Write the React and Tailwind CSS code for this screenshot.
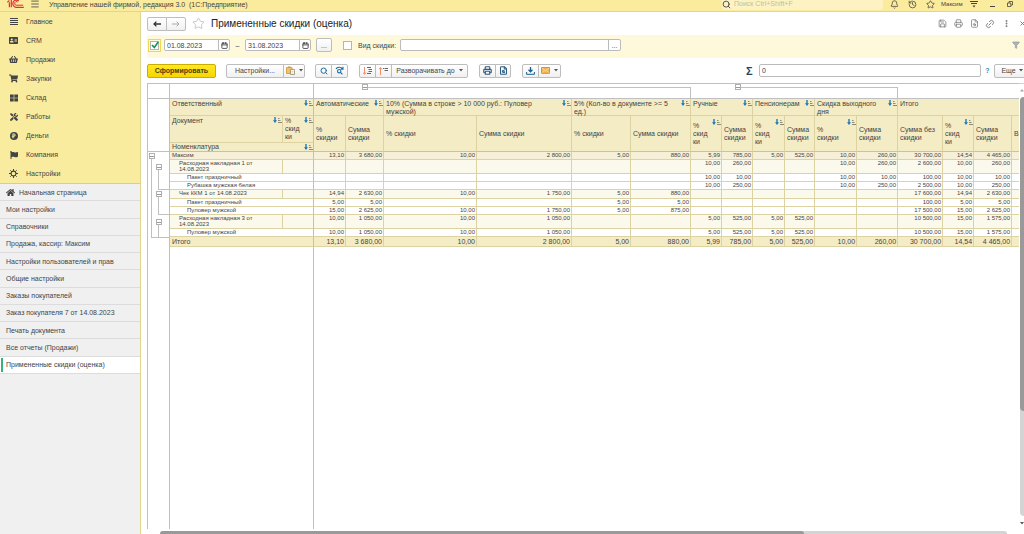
import { useState } from 'react'
import {
  Bell, Calendar, FileSearch, Funnel, History, Link2,
  Menu, MoreVertical, Printer, Save, Search, Star, X,
} from 'lucide-react'
import { FaHome, FaTools, FaShoppingCart, FaShoppingBasket, FaFlag, FaAddressCard } from 'react-icons/fa'

const sections = [
  { name: 'Главное', icon: <LinesIcon /> },
  { name: 'CRM', icon: <FaAddressCard size={9} /> },
  { name: 'Продажи', icon: <FaShoppingBasket size={9} /> },
  { name: 'Закупки', icon: <FaShoppingCart size={9} /> },
  { name: 'Склад', icon: <BlocksIcon /> },
  { name: 'Работы', icon: <FaTools size={8} /> },
  { name: 'Деньги', icon: <RubleIcon /> },
  { name: 'Компания', icon: <FaFlag size={8} /> },
  { name: 'Настройки', icon: <GearIcon /> },
]

const tabs = [
  'Начальная страница',
  'Мои настройки',
  'Справочники',
  'Продажа, кассир: Максим',
  'Настройки пользователей и прав',
  'Общие настройки',
  'Заказы покупателей',
  'Заказ покупателя 7 от 14.08.2023',
  'Печать документа',
  'Все отчеты (Продажи)',
  'Примененные скидки (оценка)',
]

const groups = [
  { name: 'Автоматические', cols: 2, sort: true },
  { name: '10% (Сумма в строке > 10 000 руб.: Пуловер мужской)', cols: 2, sort: true },
  { name: '5% (Кол-во в документе >= 5 ед.)', cols: 2, sort: true },
  { name: 'Ручные', cols: 2, sort: true },
  { name: 'Пенсионерам', cols: 2, sort: true },
  { name: 'Скидка выходного дня', cols: 2, sort: true },
  { name: 'Итого', cols: 4 },
]

const columns = [
  { name: '%\nскидки', width: 'w-[32px]' },
  { name: 'Сумма\nскидки', width: 'w-[38px]' },
  { name: '% скидки', width: 'w-[93px]' },
  { name: 'Сумма скидки', width: 'w-[95px]' },
  { name: '% скидки', width: 'w-[59px]' },
  { name: 'Сумма скидки', width: 'w-[60px]' },
  { name: '%\nскид\nки', width: 'w-[31px]', sort: true },
  { name: 'Сумма\nскидки', width: 'w-[31px]' },
  { name: '%\nскид\nки', width: 'w-[32px]', sort: true },
  { name: 'Сумма\nскидки', width: 'w-[30px]' },
  { name: '%\nскидки', width: 'w-[42px]', sort: true },
  { name: 'Сумма\nскидки', width: 'w-[41px]' },
  { name: 'Сумма без\nскидки', width: 'w-[45px]' },
  { name: '%\nскид\nки', width: 'w-[31px]', sort: true },
  { name: 'Сумма\nскидки', width: 'w-[38px]' },
  { name: 'В', width: 'w-[40px]' },
]

const rows = [
  { level: 1, name: 'Максим', height: 'h-[8px]', values: ['13,10', '3 680,00', '10,00', '2 800,00', '5,00', '880,00', '5,99', '785,00', '5,00', '525,00', '10,00', '260,00', '30 700,00', '14,54', '4 465,00', ''] },
  { level: 2, name: 'Расходная накладная 1 от\n14.08.2023', height: 'h-[14px]', values: ['', '', '', '', '', '', '10,00', '260,00', '', '', '10,00', '260,00', '2 600,00', '10,00', '260,00', ''] },
  { level: 3, name: 'Пакет праздничный', height: 'h-[8px]', values: ['', '', '', '', '', '', '10,00', '10,00', '', '', '10,00', '10,00', '100,00', '10,00', '10,00', ''] },
  { level: 3, name: 'Рубашка мужская белая', height: 'h-[8px]', values: ['', '', '', '', '', '', '10,00', '250,00', '', '', '10,00', '250,00', '2 500,00', '10,00', '250,00', ''] },
  { level: 2, name: 'Чек ККМ 1 от 14.08.2023', height: 'h-[9px]', values: ['14,94', '2 630,00', '10,00', '1 750,00', '5,00', '880,00', '', '', '', '', '', '', '17 600,00', '14,94', '2 630,00', ''] },
  { level: 3, name: 'Пакет праздничный', height: 'h-[8px]', values: ['5,00', '5,00', '', '', '5,00', '5,00', '', '', '', '', '', '', '100,00', '5,00', '5,00', ''] },
  { level: 3, name: 'Пуловер мужской', height: 'h-[8px]', values: ['15,00', '2 625,00', '10,00', '1 750,00', '5,00', '875,00', '', '', '', '', '', '', '17 500,00', '15,00', '2 625,00', ''] },
  { level: 2, name: 'Расходная накладная 3 от\n14.08.2023', height: 'h-[14px]', values: ['10,00', '1 050,00', '10,00', '1 050,00', '', '', '5,00', '525,00', '5,00', '525,00', '', '', '10 500,00', '15,00', '1 575,00', ''] },
  { level: 3, name: 'Пуловер мужской', height: 'h-[8px]', values: ['10,00', '1 050,00', '10,00', '1 050,00', '', '', '5,00', '525,00', '5,00', '525,00', '', '', '10 500,00', '15,00', '1 575,00', ''] },
]

const totals = ['13,10', '3 680,00', '10,00', '2 800,00', '5,00', '880,00', '5,99', '785,00', '5,00', '525,00', '10,00', '260,00', '30 700,00', '14,54', '4 465,00', '']

const levelStyles = {
  1: { row: 'bg-[#f6f0d8]', indent: 'pl-[2px]' },
  2: { row: 'bg-[#fbf9ec]', indent: 'pl-[9px]' },
  3: { row: 'bg-white', indent: 'pl-[17px]' },
}

const buttonStyle = 'flex items-center justify-center h-[14px] border border-[#bdbdbd] bg-linear-to-b from-white to-[#f0f0f0] shrink-0'
const cellBorder = 'border-r border-b border-[#ddd2a2]'

function LinesIcon() {
  return (
    <svg width="8" height="8" viewBox="0 0 8 8" stroke="currentColor">
      <path d="M0 .5h8M0 2.5h8M0 4.5h8M0 6.5h8" />
    </svg>
  )
}

function BlocksIcon() {
  return (
    <svg width="8" height="8" viewBox="0 0 8 8" fill="currentColor">
      <path d="M0 .5h3.7v3.2H0zM4.3.5H8v3.2H4.3zM0 4.3h3.7v3.2H0zM4.3 4.3H8v3.2H4.3z" />
    </svg>
  )
}

function RubleIcon() {
  return (
    <span className="flex items-center justify-center w-2 h-2 rounded-full bg-[#444] text-[#faec9f] text-[6px] leading-none font-bold">₽</span>
  )
}

function GearIcon() {
  return (
    <svg width="9" height="9" viewBox="0 0 9 9" fill="none" stroke="currentColor">
      <circle cx="4.5" cy="4.5" r="2.4" strokeWidth="1.1" />
      <path d="M4.5 0v2M4.5 7v2M0 4.5h2M7 4.5h2M1.3 1.3l1.4 1.4M6.3 6.3l1.4 1.4M1.3 7.7l1.4-1.4M6.3 2.7l1.4-1.4" strokeWidth="1" />
    </svg>
  )
}

function Logo() {
  return (
    <svg width="17" height="8" viewBox="0 0 17 8" fill="none" stroke="#e0303a">
      <path d="M.3 2.2 2.4.6M2.4 2.2v5M4.3 0v7.2" strokeWidth="1.2" />
      <path d="M11.8 1A3.6 3.6 0 1 0 9 7.3H16.8" strokeWidth="1.2" />
      <path d="M10.6 2A1.8 1.8 0 1 0 9.2 5.2H16.2" strokeWidth="1" />
    </svg>
  )
}

function SortIcon() {
  return (
    <svg className="shrink-0" width="9" height="6" viewBox="0 0 9 6" fill="none">
      <path d="M2 0v4" stroke="#1c78bd" strokeWidth="1.4" />
      <path d="M0 3.2h4L2 6z" fill="#1c78bd" />
      <path d="M5 1.5h1.5M5 3.5h2.5M5 5.5h4" stroke="#8d8974" />
    </svg>
  )
}

function Caret() {
  return (
    <svg width="4" height="3" viewBox="0 0 4 3" fill="#555">
      <path d="M0 0h4L2 2.6z" />
    </svg>
  )
}

function PasteIcon() {
  return (
    <svg width="9" height="9" viewBox="0 0 9 9" fill="none">
      <path d="M.5 1.5h5.5v6H.5z" fill="#f0c36a" stroke="#d9a443" />
      <path d="M2 .5h2.5v1.5H2z" fill="#c99a3b" />
      <path d="M4.5 3.5h4v5h-4z" fill="#fff" stroke="#9a8a66" strokeWidth=".8" />
      <path d="M5.5 5.5h2M5.5 7h2" stroke="#bdb294" strokeWidth=".6" />
    </svg>
  )
}

function MailIcon() {
  return (
    <svg width="9" height="7" viewBox="0 0 9 7" fill="none">
      <path d="M.5.5h8v5.8h-8z" fill="#f5b54a" stroke="#d8942a" />
      <path d="M1 1.2 4.5 4 8 1.2M1 5.8l2.2-2.3M8 5.8 5.8 3.5" stroke="#fbe3b4" strokeWidth=".7" />
    </svg>
  )
}

function RefreshSearchIcon() {
  return (
    <svg width="9" height="9" viewBox="0 0 9 9" fill="none" stroke="#1d6fa5" strokeWidth="1.1">
      <path d="M1 3C2 .8 6 .6 7.4 2.6M8 .8v2.3H5.8" />
      <circle cx="4.2" cy="5.2" r="1.7" />
      <path d="M5.5 6.4 7.4 8.4" />
    </svg>
  )
}

function ExpandIcon() {
  return (
    <svg width="9" height="8" viewBox="0 0 9 8" fill="none">
      <path d="M1.5 0v7M0 5.5l1.5 1.8L3 5.5" stroke="#ee8d6a" />
      <path d="M4 .5h4M5.5 2.5H9M5.5 4.5H9M4 6.5h4" stroke="#666" />
    </svg>
  )
}

function CollapseIcon() {
  return (
    <svg width="9" height="8" viewBox="0 0 9 8" fill="none">
      <path d="M1.5 8V.8M0 2.4 1.5.6 3 2.4" stroke="#ee8d6a" />
      <path d="M4 1.5h1M5.5 1.5H9M5.5 3.5H9" stroke="#666" />
    </svg>
  )
}

function DownloadIcon() {
  return (
    <svg width="9" height="8" viewBox="0 0 9 8" fill="none" stroke="#1d5f90">
      <path d="M4.5 0v4.5M2.5 2.8l2 2 2-2" strokeWidth="1.3" />
      <path d="M.6 5v2.3h7.8V5" />
    </svg>
  )
}

function Toggle({ label }) {
  return (
    <button type="button" aria-label={label} className="flex items-center justify-center w-[6px] h-[6px] border border-[#b0b0b0] bg-white shrink-0">
      <span className="w-[4px] h-px bg-[#999]" />
    </button>
  )
}

function TopBar() {
  return (
    <header className="flex items-start h-3 border-b border-[#e3d58c] bg-[#fbeb9c] shrink-0">
      <div className="flex flex-1 items-center h-2 pl-[7px] min-w-0">
        <Logo />
        <button type="button" aria-label="Меню" className="ml-[6px]">
          <Menu size={10} strokeWidth={2} />
        </button>
        <span className="ml-[9px] whitespace-nowrap">Управление нашей фирмой, редакция 3.0&nbsp; (1С:Предприятие)</span>
      </div>
      <label className="flex items-center w-[161px] h-[10px] mr-[5px] bg-[#fdf3c2] rounded-b-sm">
        <Search size={9} strokeWidth={2.4} className="mb-[2px]" />
        <input aria-label="Поиск" placeholder="Поиск Ctrl+Shift+F" className="flex-1 min-w-0 ml-[3px] mb-[3px] h-2 outline-none placeholder:text-[#c4bd9b]" />
      </label>
      <div className="flex items-center h-2">
        <button type="button" aria-label="Уведомления" className="flex justify-center w-[12px]"><Bell size={9} /></button>
        <button type="button" aria-label="История" className="flex justify-center w-[12px] ml-[6px]"><History size={9} /></button>
        <button type="button" aria-label="Избранное" className="flex justify-center w-[12px] ml-[6px]"><Star size={9} /></button>
        <a href="#user" className="w-[22px] ml-[5px] text-[6px]">Максим</a>
        <button type="button" aria-label="Сервис" className="flex justify-center w-[12px] ml-[5px]">
          <svg width="8" height="7" viewBox="0 0 8 7" fill="currentColor"><path d="M0 0h8v1H0zM1 2h6v1H1zM2.5 4.6h3L4 6.4z" /></svg>
        </button>
        <button type="button" aria-label="Свернуть" className="flex justify-center w-[12px] ml-[6px] pt-[4px]"><span className="w-[5px] h-px bg-[#444]" /></button>
        <button type="button" aria-label="Восстановить" className="flex justify-center w-[12px] ml-[6px] mr-2">
          <svg width="6" height="6" viewBox="0 0 6 6" fill="none" stroke="currentColor" strokeWidth=".8"><path d="M.5 2h3.3v3.5H.5zM2 2V.5h3.5V4H4" /></svg>
        </button>
      </div>
    </header>
  )
}

function Sidebar() {
  const [active, setActive] = useState('Примененные скидки (оценка)')

  return (
    <aside className="flex flex-col w-[141px] border-r border-[#e3d58c] bg-[#f0f0f0] shrink-0">
      <nav className="bg-[#faec9f]">
        {sections.map((section) => (
          <a key={section.name} href="#section" className="flex items-center h-[19px] pl-2">
            <span className="flex justify-center w-[11px]">{section.icon}</span>
            <span className="ml-[7px]">{section.name}</span>
          </a>
        ))}
      </nav>
      <div className="flex flex-col h-[191px] border-t border-[#d9cd8c]">
        {tabs.map((tab, i) => (
          <button
            key={tab}
            type="button"
            onClick={() => setActive(tab)}
            className={`flex flex-1 items-center border-b border-[#dcdcdc] text-left whitespace-nowrap ${tab === active ? 'bg-white' : ''}`}
          >
            <span className={`w-[2px] h-[14px] ml-px mr-[3px] ${tab === active ? 'bg-[#35b37e]' : ''}`} />
            {i === 0 && <FaHome size={9} className="mr-[4px]" />}
            {tab}
          </button>
        ))}
      </div>
    </aside>
  )
}

function TitleRow() {
  return (
    <div className="flex items-center h-[23px] pl-[6px] shrink-0">
      <div className="flex">
        <button type="button" aria-label="Назад" className={`${buttonStyle} w-[20px] rounded-l-xs`}>
          <svg width="8" height="6" viewBox="0 0 8 6" fill="none" stroke="#333" strokeWidth="1.3"><path d="M8 3H1M3.4.6 1 3l2.4 2.4" /></svg>
        </button>
        <button type="button" aria-label="Вперед" className={`${buttonStyle} w-[20px] -ml-px rounded-r-xs`}>
          <svg width="8" height="6" viewBox="0 0 8 6" fill="none" stroke="#aaa"><path d="M0 3h7M4.6.6 7 3 4.6 5.4" /></svg>
        </button>
      </div>
      <button type="button" aria-label="В избранное" className="ml-[6px] text-[#b5b5b5]">
        <Star size={13} strokeWidth={1.4} />
      </button>
      <h1 className="flex-1 ml-[6px] text-[10px] leading-3 text-[#222]">Примененные скидки (оценка)</h1>
      <div className="flex items-center -mr-[6px] text-[#777]">
        <button type="button" aria-label="Сохранить" className="flex justify-center w-4"><Save size={9} /></button>
        <button type="button" aria-label="Печать" className="flex justify-center w-4"><Printer size={9} /></button>
        <button type="button" aria-label="Просмотр" className="flex justify-center w-4"><FileSearch size={9} /></button>
        <button type="button" aria-label="Ссылка" className="flex justify-center w-4"><Link2 size={10} className="-rotate-45" /></button>
        <button type="button" aria-label="Еще действия" className="flex justify-center w-4"><MoreVertical size={9} strokeWidth={3} /></button>
        <button type="button" aria-label="Закрыть" className="flex justify-center w-4"><X size={7} strokeWidth={3} /></button>
      </div>
    </div>
  )
}

function DateField({ label, value }) {
  return (
    <div className="flex w-[66px] h-3 border border-[#bbb] rounded-xs bg-white shrink-0">
      <input aria-label={label} defaultValue={value} className="flex-1 min-w-0 pl-[2px] outline-none" />
      <button type="button" aria-label="Выбрать дату" className="flex items-center justify-center w-[11px] border-l border-[#bbb]">
        <Calendar size={7} strokeWidth={3} />
      </button>
    </div>
  )
}

function FilterRow() {
  return (
    <div className="flex items-center h-[23px] ml-[6px] bg-[#fff9db] pb-[3px] shrink-0">
      <label className="flex items-center justify-center w-[13px] h-[13px] ml-px border border-[#f3d64d]">
        <input type="checkbox" defaultChecked aria-label="Период" className="peer appearance-none w-[9px] h-[9px] border border-[#b5b5b5] bg-white" />
        <svg className="absolute" width="8" height="8" viewBox="0 0 8 8" fill="none" stroke="#17935a" strokeWidth="1.6"><path d="M1 4l2.3 2.4L7.2 1" /></svg>
      </label>
      <div className="flex items-center ml-[3px]">
        <DateField label="Начало периода" value="01.08.2023" />
        <span className="w-[15px] text-center">–</span>
        <DateField label="Конец периода" value="31.08.2023" />
        <button type="button" className={`${buttonStyle} w-[16px] ml-[5px] rounded-xs`}>...</button>
      </div>
      <label className="flex items-center ml-[11px]">
        <input type="checkbox" className="appearance-none w-[9px] h-[9px] mr-[6px] border border-[#b5b5b5] bg-white" />
        <span className="w-[42px] whitespace-nowrap">Вид скидки:</span>
      </label>
      <div className="flex w-[221px] h-3 border border-[#bbb] rounded-xs bg-white">
        <input aria-label="Вид скидки" className="flex-1 min-w-0 outline-none" />
        <button type="button" className="w-[12px] border-l border-[#bbb]">...</button>
      </div>
      <button type="button" aria-label="Фильтр" className="ml-auto mr-1 text-[#8b97a3]">
        <Funnel size={8} fill="#aab4bd" />
      </button>
    </div>
  )
}

function Toolbar() {
  return (
    <div className="flex items-center h-[25px] pl-[6px] overflow-hidden shrink-0">
      <button type="button" className="w-[69px] h-[14px] border border-[#c9ad00] rounded-xs bg-linear-to-b from-[#ffe81f] to-[#f6d500] font-bold text-[#4a4200] shrink-0">Сформировать</button>
      <div className="flex ml-[10px]">
        <button type="button" className={`${buttonStyle} w-[58px] rounded-l-xs`}>Настройки...</button>
        <button type="button" aria-label="Варианты" className={`${buttonStyle} w-[22px] gap-[4px] -ml-px rounded-r-xs`}><PasteIcon /><Caret /></button>
      </div>
      <div className="flex ml-[10px] text-[#1d6fa5]">
        <button type="button" aria-label="Найти" className={`${buttonStyle} w-[17px] rounded-l-xs`}><Search size={8} strokeWidth={3} /></button>
        <button type="button" aria-label="Искать далее" className={`${buttonStyle} w-[17px] -ml-px rounded-r-xs`}><RefreshSearchIcon /></button>
      </div>
      <div className="flex ml-[11px]">
        <button type="button" aria-label="Развернуть" className={`${buttonStyle} w-[17px] rounded-l-xs`}><ExpandIcon /></button>
        <button type="button" aria-label="Свернуть" className={`${buttonStyle} w-[17px] -ml-px`}><CollapseIcon /></button>
        <button type="button" className={`${buttonStyle} w-[77px] gap-[4px] -ml-px rounded-r-xs`}>Разворачивать до <Caret /></button>
      </div>
      <div className="flex ml-[11px] text-[#2f5a80]">
        <button type="button" aria-label="Печать" className={`${buttonStyle} w-[17px] rounded-l-xs`}><Printer size={9} strokeWidth={3} /></button>
        <button type="button" aria-label="Предварительный просмотр" className={`${buttonStyle} w-[16px] -ml-px rounded-r-xs`}><FileSearch size={9} strokeWidth={2.8} /></button>
      </div>
      <div className="flex ml-[11px]">
        <button type="button" aria-label="Сохранить" className={`${buttonStyle} w-[17px] rounded-l-xs`}><DownloadIcon /></button>
        <button type="button" aria-label="Отправить" className={`${buttonStyle} w-[23px] gap-[4px] -ml-px rounded-r-xs`}><MailIcon /><Caret /></button>
      </div>
      <label className="flex items-center ml-auto shrink-0">
        <span className="w-[13px] text-[11px] leading-3 font-bold text-[#2c4257]">Σ</span>
        <input defaultValue="0" className="w-[222px] h-[13px] pl-[2px] border border-[#bbb] rounded-xs outline-none" />
      </label>
      <a href="#help" className="w-[13px] text-center font-bold text-[#2b8fcb] shrink-0">?</a>
      <button type="button" className={`${buttonStyle} w-[36px] -mr-[6px] gap-[3px] rounded-xs`}>Еще <Caret /></button>
    </div>
  )
}

function TreeBranch({ label, height, top, last }) {
  return (
    <div className={`flex flex-col pl-[4px] ${height} ${top}`}>
      <Toggle label={label} />
      <div className={`flex-1 ml-[2px] border-l border-[#c0c0c0] ${last ? '' : 'border-b'}`} />
    </div>
  )
}

function GroupTree() {
  return (
    <div className="pl-px pt-px">
      <Toggle label="Максим" />
      <div className="ml-[2px] h-[79px] border-l border-b border-[#c0c0c0]">
        <TreeBranch label="Расходная накладная 1" height="h-[31px]" top="pt-[5px]" />
        <TreeBranch label="Чек ККМ 1" height="h-[25px]" top="pt-px" />
        <TreeBranch label="Расходная накладная 3" height="h-[22px]" top="pt-[4px]" last />
      </div>
    </div>
  )
}

function Brackets() {
  return (
    <div className="flex h-[15px] border-b border-[#c0c0c0]">
      <div className="w-[22px] border-r border-[#c0c0c0] shrink-0" />
      <div className="w-[144px] border-r border-[#c0c0c0] shrink-0" />
      <div className="w-[48px] shrink-0" />
      <Toggle label="Автоматические" />
      <div className="w-[323px] mt-[3px] border-t border-r border-[#c0c0c0] shrink-0" />
      <div className="w-[44px] shrink-0" />
      <Toggle label="Ручные" />
      <div className="w-[157px] mt-[3px] border-t border-r border-[#c0c0c0] shrink-0" />
    </div>
  )
}

function ReportTable() {
  return (
    <table className="table-fixed w-[882px] border-separate border-spacing-0 text-[6px] leading-[6px] shrink-0">
      <colgroup>
        <col className="w-[113px]" />
        <col className="w-[31px]" />
        {columns.map((col, i) => <col key={i} className={col.width} />)}
      </colgroup>
      <thead className="bg-[#f4ecc5] text-[7px] leading-[8px]">
        <tr className="h-[17px]">
          <th colSpan={2} className="p-0 pl-[2px] border-r border-b border-[#ddd2a2] border-r-[#c0c0c0] align-top font-normal text-left">
            <div className="flex justify-between pt-px">Ответственный <SortIcon /></div>
          </th>
          {groups.map((group) => (
            <th key={group.name} colSpan={group.cols} className={`${cellBorder} p-0 pl-[2px] align-top font-normal text-left`}>
              <div className="flex items-start justify-between h-4 pt-px">{group.name}{group.sort && <SortIcon />}</div>
            </th>
          ))}
        </tr>
        <tr className="h-[27px]">
          <th className={`${cellBorder} p-0 pl-[2px] align-top font-normal text-left`}>
            <div className="flex justify-between pt-px">Документ <SortIcon /></div>
          </th>
          <th className="p-0 pl-[2px] border-r border-b border-[#ddd2a2] border-r-[#c0c0c0] align-top font-normal text-left whitespace-pre-line">
            <div className="flex items-start justify-between pt-px">{'%\nскид\nки'}<SortIcon /></div>
          </th>
          {columns.map((col, i) => (
            <th key={i} rowSpan={2} className="p-0 pl-[2px] border-r border-b border-[#ddd2a2] border-b-[#c0c0c0] font-normal text-left whitespace-pre-line">
              <div className="flex items-center justify-between h-[34px]">
                {col.name}
                {col.sort && <span className="self-start pt-[2px]"><SortIcon /></span>}
              </div>
            </th>
          ))}
        </tr>
        <tr className="h-[9px]">
          <th colSpan={2} className="p-0 pl-[2px] border-r border-b border-[#c0c0c0] font-normal text-left">
            <div className="flex items-center justify-between">Номенклатура <SortIcon /></div>
          </th>
        </tr>
      </thead>
      <tbody>
        {rows.map((row, i) => (
          <tr key={i} className={`${row.height} ${levelStyles[row.level].row}`}>
            <td colSpan={row.level === 2 ? 1 : 2} className={`${cellBorder} ${levelStyles[row.level].indent} ${row.level === 2 ? '' : 'border-r-[#c0c0c0]'} p-0 align-top whitespace-pre-line`}>{row.name}</td>
            {row.level === 2 && <td className="p-0 border-r border-b border-[#ddd2a2] border-r-[#c0c0c0]" />}
            {row.values.map((value, j) => (
              <td key={j} className={`${cellBorder} p-0 pr-px align-top text-right whitespace-nowrap`}>{value}</td>
            ))}
          </tr>
        ))}
      </tbody>
      <tfoot className="bg-[#f4ecc5] text-[7px] leading-[8px]">
        <tr className="h-[10px]">
          <td colSpan={2} className="p-0 pl-[2px] border-r border-b border-[#ddd2a2] border-r-[#c0c0c0]">Итого</td>
          {totals.map((value, j) => (
            <td key={j} className={`${cellBorder} p-0 pr-px text-right whitespace-nowrap`}>{value}</td>
          ))}
        </tr>
      </tfoot>
    </table>
  )
}

function Report() {
  return (
    <div className="flex flex-1 ml-[6px] min-h-0">
      <div className="flex flex-col flex-1 min-w-0">
        <div className="flex flex-col flex-1 min-h-0 border-l border-t border-[#c0c0c0] overflow-hidden">
          <Brackets />
          <div className="flex">
            <div className="w-[22px] border-r border-[#c0c0c0] shrink-0">
              <div className="h-[53px] border-b border-[#c0c0c0]" />
              <GroupTree />
            </div>
            <ReportTable />
          </div>
          <div className="flex flex-1">
            <div className="w-[22px] border-r border-[#c0c0c0]" />
            <div className="w-[144px] border-r border-[#c0c0c0]" />
          </div>
        </div>
        <div className="flex items-end h-[5px] shrink-0">
          <span className="w-[13px] shrink-0" />
          <div className="flex-1 h-[3px] mr-3 bg-[#d4d4d4] rounded-t-sm">
            <div className="w-[76%] h-[3px] bg-[#999] rounded-t-sm" />
          </div>
        </div>
      </div>
      <div className="flex flex-col items-end w-[5px] border-t border-[#d4d4d4] shrink-0">
        <span className="h-[13px] pt-[5px]"><svg width="4" height="3" viewBox="0 0 4 3" fill="#aaa"><path d="M0 2.6h4L2 0z" /></svg></span>
        <div className="flex-1 w-[4px] bg-[#d4d4d4] rounded-l-sm">
          <div className="w-[4px] h-3/4 bg-[#999] rounded-l-sm" />
        </div>
        <span className="h-[18px] pt-[6px]"><Caret /></span>
      </div>
    </div>
  )
}

export default function App() {
  return (
    <div className="flex flex-col h-screen overflow-hidden bg-white font-['Liberation_Sans',Arial,sans-serif] text-[7px] leading-[9px] text-[#444]">
      <TopBar />
      <div className="flex flex-1 min-h-0">
        <Sidebar />
        <main className="flex flex-col flex-1 min-w-0 overflow-hidden">
          <TitleRow />
          <FilterRow />
          <Toolbar />
          <Report />
        </main>
      </div>
    </div>
  )
}
